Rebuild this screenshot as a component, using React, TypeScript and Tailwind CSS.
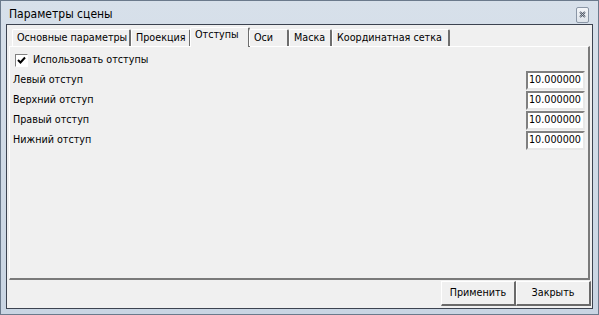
import React from "react";

const rows = [
  { label: "Левый отступ", value: "10.000000" },
  { label: "Верхний отступ", value: "10.000000" },
  { label: "Правый отступ", value: "10.000000" },
  { label: "Нижний отступ", value: "10.000000" },
];

const tabs = ["Основные параметры", "Проекция", "Отступы", "Оси", "Маска", "Координатная сетка"];
const tabWidths = ["w-[119px]", "w-[60px]", "w-[60px]", "w-[40px]", "w-[43px]", "w-[118px]"];

export default function App() {
  return (
    <div
      className="w-[599px] h-[315px] flex flex-col bg-gradient-to-b from-[#d7e0ea] to-[#c9d5e3] border border-[#6b7a8c] text-black"
      style={{ fontFamily: '"DejaVu Sans Condensed", "Liberation Sans", Arial, sans-serif' }}
    >
      {/* title bar */}
      <div className="h-[23px] shrink-0 flex items-center justify-between pl-[8px] pr-[9px]">
        <span className="text-[12px] leading-none pt-[2px]">Параметры сцены</span>
        <button className="w-[13px] h-[16px] mt-[4px] rounded-[2px] border border-[#8a96a6] bg-gradient-to-b from-[#f4f6f9] to-[#dde3ea] grid place-items-center">
          <svg width="7" height="7" viewBox="0 0 7 7">
            <path d="M1 1 L6 6 M6 1 L1 6" stroke="#4a5464" strokeWidth="1.8" />
            <path d="M1 1 L6 6 M6 1 L1 6" stroke="#ffffff" strokeWidth="0.5" />
          </svg>
        </button>
      </div>

      {/* client area */}
      <div className="flex-1 mx-[5px] mb-[6px] flex flex-col bg-[#f0f0f0] border border-[#3c4350] text-[10.7px]">
        <div className="flex-1 flex flex-col px-[2px] pt-[2px]">
          {/* tab strip */}
          <div className="h-[20px] flex items-end pl-[3px] relative z-10">
            {tabs.map((t, i) => {
              const active = i === 2;
              return (
                <div
                  key={t}
                  className={`${tabWidths[i]} ${
                    active
                      ? "h-[20px] -mx-[1px] bg-[#f0f0f0] pb-[4px]"
                      : "h-[17px] mb-[1px]"
                  } shrink-0 flex items-center pl-[4px] leading-none whitespace-nowrap border-t border-l border-white border-r-2 border-r-[#6e6e6e] rounded-t-[2px]`}
                >
                  {t}
                </div>
              );
            })}
          </div>
          {/* page */}
          <div className="h-[234px] -mt-[1px] flex flex-col border-t border-l border-white border-r-2 border-b-2 border-r-[#7a7a7a] border-b-[#7a7a7a] pl-[5px] pr-[3px] pt-[6px]">
            <label className="flex items-center gap-[5px] h-[14px]">
              <span className="w-[13px] h-[13px] border border-t-[#808080] border-l-[#808080] border-r-white border-b-white bg-white grid place-items-center">
                <svg width="9" height="9" viewBox="0 0 9 9">
                  <path d="M1 4 L3.5 6.5 L8 1.5" stroke="#000" strokeWidth="2" fill="none" />
                </svg>
              </span>
              <span>Использовать отступы</span>
            </label>
            <div className="flex flex-col mt-[3px]">
              {rows.map((r) => (
                <div key={r.label} className="h-[20px] flex items-center justify-between">
                  <span className="-ml-[2px]">{r.label}</span>
                  <div className="w-[59px] h-[19px] bg-white border-2 border-t-[#808080] border-l-[#808080] border-r-[#e8e8e8] border-b-[#e8e8e8] flex items-center pl-[1px] leading-none">
                    {r.value}
                  </div>
                </div>
              ))}
            </div>
          </div>
        </div>
        {/* footer buttons */}
        <div className="h-[28px] shrink-0 flex justify-end items-center pr-[1px] pb-[1px]">
          {["Применить", "Закрыть"].map((b) => (
            <button
              key={b}
              className="w-[75px] h-[25px] bg-[#f0f0f0] border-t border-l border-white border-r-2 border-b-2 border-r-[#6a6a6a] border-b-[#6a6a6a]"
            >
              {b}
            </button>
          ))}
        </div>
      </div>
    </div>
  );
}
